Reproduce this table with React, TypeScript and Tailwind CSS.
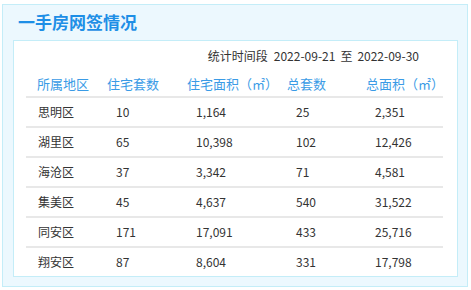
const ROWS = [
  ['思明区', '10', '1,164', '25', '2,351'],
  ['湖里区', '65', '10,398', '102', '12,426'],
  ['海沧区', '37', '3,342', '71', '4,581'],
  ['集美区', '45', '4,637', '540', '31,522'],
  ['同安区', '171', '17,091', '433', '25,716'],
  ['翔安区', '87', '8,604', '331', '17,798'],
]

const HEADERS = ['所属地区', '住宅套数', '住宅面积（㎡）', '总套数', '总面积（㎡）']

const font = { fontFamily: '"Noto Sans CJK SC", "DejaVu Sans", sans-serif' }

export default function App() {
  return (
    <div className="w-[471px] h-[290px] bg-white pt-[4px] pl-[2px]" style={font}>
      <div className="w-[466px] h-[283px] bg-[#ecf8fe] border border-[#c4edf8] flex flex-col">
        {/* Title */}
        <div className="h-[35px] pl-[15px] pt-[5px] text-[17px] leading-[24px] font-bold text-[#1e8fe6]">
          一手房网签情况
        </div>
        {/* Card */}
        <div className="ml-[10px] w-[445px] h-[237px] bg-white border border-[#c4edf8]">
          <div className="h-[30px] flex items-center justify-end pr-[38px] text-[12px] text-[#333]">
            <span>统计时间段</span>
            <span className="ml-[6px]">2022-09-21</span>
            <span className="ml-[5px]">至</span>
            <span className="ml-[5px]">2022-09-30</span>
          </div>
          <div className="mx-[12px] w-[417px]">
            <div className="grid grid-cols-[70px_80px_100px_79px_88px] h-[25px] items-center text-[13px] text-[#3a9be6]">
              {HEADERS.map(h => (
                <div key={h} className="pl-[11px] whitespace-nowrap">{h}</div>
              ))}
            </div>
            {ROWS.map((r, i) => (
              <div
                key={r[0]}
                className={`grid grid-cols-[70px_80px_100px_79px_88px] h-[30px] items-center text-[12px] text-[#333] border-t-2 border-[#e8e8e8] ${i === 0 ? '' : ''}`}
              >
                <div className="pl-[12px]">{r[0]}</div>
                <div className="pl-[20px]">{r[1]}</div>
                <div className="pl-[20px]">{r[2]}</div>
                <div className="pl-[20px]">{r[3]}</div>
                <div className="pl-[20px]">{r[4]}</div>
              </div>
            ))}
          </div>
        </div>
      </div>
    </div>
  )
}
